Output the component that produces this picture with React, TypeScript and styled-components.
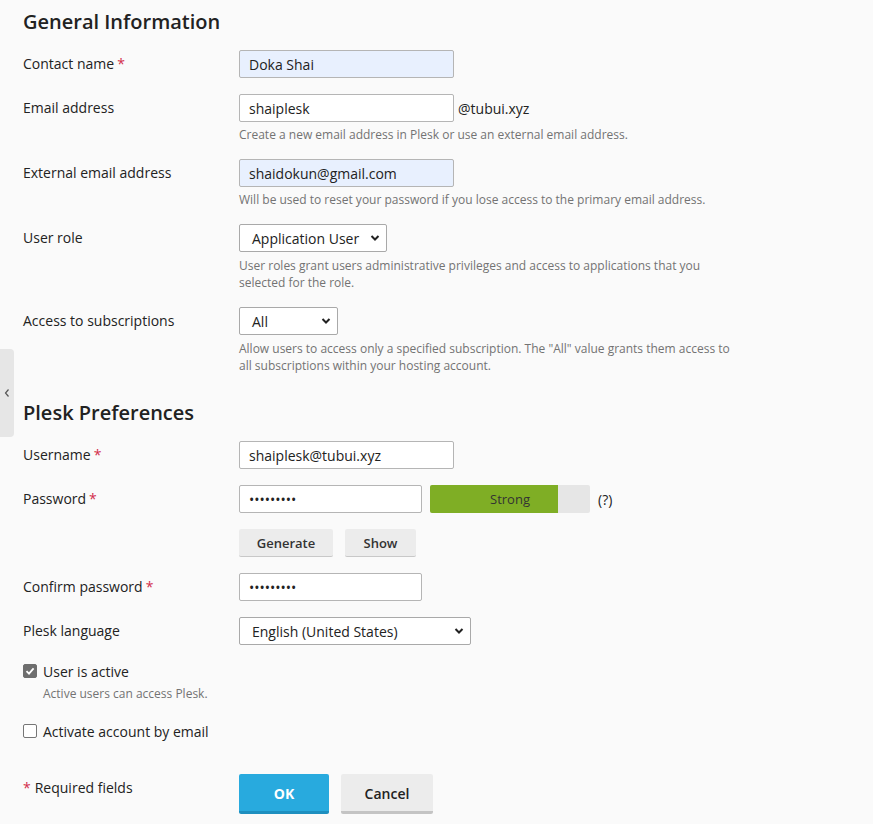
import React from 'react'
import styled, { createGlobalStyle } from 'styled-components'

const GlobalStyle = createGlobalStyle`
  html, body {
    margin: 0;
    padding: 0;
    background: #fafafa;
  }
  body {
    font-family: "Open Sans", "Noto Sans", sans-serif;
    color: #222;
    font-size: 14px;
  }
`

const Page = styled.div`
  position: relative;
  min-height: 824px;
  padding: 8px 0 0 23px;
  box-sizing: border-box;
`

const SideToggle = styled.div`
  position: absolute;
  left: 0;
  top: 349px;
  width: 14px;
  height: 88px;
  background: #e6e6e6;
  border-radius: 0 4px 4px 0;
  display: flex;
  align-items: center;
  justify-content: center;
`

const Heading = styled.h2<{ $top?: number }>`
  margin: ${(p) => p.$top ?? 0}px 0 14px;
  font-size: 20px;
  line-height: 28px;
  font-weight: 600;
  color: #222;
`

const Row = styled.div<{ $gap?: number }>`
  display: flex;
  align-items: flex-start;
  margin-bottom: ${(p) => p.$gap ?? 16}px;
`

const Label = styled.div`
  width: 216px;
  flex: none;
  line-height: 28px;
  font-size: 14px;
  color: #222;
`

const Star = styled.span`
  color: #d22d4b;
  margin-left: 3px;
`

const Field = styled.div`
  display: flex;
  flex-direction: column;
`

const Inline = styled.div<{ $gap?: number }>`
  display: flex;
  align-items: center;
  gap: ${(p) => p.$gap ?? 8}px;
`

const Input = styled.input<{ $width: number; $filled?: boolean }>`
  box-sizing: border-box;
  width: ${(p) => p.$width}px;
  height: 28px;
  padding: 0 9px;
  border: 1px solid #b5b5b5;
  border-radius: 2px;
  background: ${(p) => (p.$filled ? '#e8f0fe' : '#fff')};
  font-family: inherit;
  font-size: 14px;
  color: #222;
  outline: none;
`

const SelectBox = styled.div<{ $width: number }>`
  position: relative;
  box-sizing: border-box;
  width: ${(p) => p.$width}px;
  height: 28px;
  border: 1px solid #a9a9a9;
  border-radius: 2px;
  background: #fff;
  display: flex;
  align-items: center;
  padding: 0 12px;
  font-size: 14px;
  color: #222;

  svg {
    position: absolute;
    right: 6px;
    top: 9px;
  }
`

const Suffix = styled.span`
  font-size: 14px;
  color: #222;
`

const Hint = styled.div<{ $multi?: boolean }>`
  margin-top: ${(p) => (p.$multi ? 5 : 4)}px;
  width: 500px;
  font-size: 12px;
  line-height: 17px;
  color: #737373;
`

const Strength = styled.div`
  position: relative;
  width: 160px;
  height: 28px;
  background: #e6e6e6;
  border-radius: 2px;
  overflow: hidden;
  display: flex;
  align-items: center;
  justify-content: center;
  font-size: 13px;
  color: #333;
`

const StrengthFill = styled.div`
  position: absolute;
  left: 0;
  top: 0;
  bottom: 0;
  background: #7fae25;
`

const StrengthText = styled.span`
  position: relative;
`

const Help = styled.span`
  font-size: 14px;
  color: #222;
`

const SmallButton = styled.button<{ $width: number }>`
  box-sizing: border-box;
  width: ${(p) => p.$width}px;
  height: 28px;
  border: none;
  border-bottom: 1px solid #c8c8c8;
  border-radius: 2px;
  background: #ececec;
  font-family: inherit;
  font-size: 13px;
  font-weight: 600;
  color: #333;
  padding: 0;
`

const Buttons = styled.div`
  display: flex;
  gap: 12px;
`

const CheckRow = styled.label`
  display: flex;
  align-items: center;
  gap: 6px;
  height: 20px;
  font-size: 14px;
  color: #222;
`

const Box = styled.span<{ $checked?: boolean }>`
  box-sizing: border-box;
  width: 14px;
  height: 14px;
  border-radius: 2px;
  border: 1px solid ${(p) => (p.$checked ? '#6e6e6e' : '#767676')};
  background: ${(p) => (p.$checked ? '#6e6e6e' : '#fff')};
  display: flex;
  align-items: center;
  justify-content: center;
`

const CheckHint = styled.div`
  margin: 4px 0 19px 20px;
  font-size: 12px;
  line-height: 17px;
  color: #737373;
`

const Footer = styled.div`
  display: flex;
  align-items: flex-start;
  margin-top: 33px;
`

const FooterLabel = styled.div`
  width: 216px;
  line-height: 28px;
  font-size: 14px;
  color: #222;
`

const FooterStar = styled(Star)`
  margin: 0 4px 0 0;
`

const MainButton = styled.button<{ $primary?: boolean; $width: number }>`
  box-sizing: border-box;
  width: ${(p) => p.$width}px;
  height: 40px;
  border: none;
  border-bottom: 3px solid ${(p) => (p.$primary ? '#1e8fbf' : '#c4c4c4')};
  border-radius: 2px;
  background: ${(p) => (p.$primary ? '#28aade' : '#ececec')};
  color: ${(p) => (p.$primary ? '#fff' : '#222')};
  font-family: inherit;
  font-size: 14px;
  font-weight: ${(p) => (p.$primary ? 700 : 600)};
  padding: 2px 0 0;
`

const Chevron = () => (
  <svg width="10" height="8" viewBox="0 0 10 8">
    <path d="M1.5 2 L5 5.5 L8.5 2" fill="none" stroke="#222" strokeWidth="2" />
  </svg>
)

const Check = () => (
  <svg width="10" height="10" viewBox="0 0 10 10">
    <path d="M1.5 5.2 L4 7.6 L8.6 2.4" fill="none" stroke="#fff" strokeWidth="1.8" />
  </svg>
)

const Select = ({ width, value }: { width: number; value: string }) => (
  <SelectBox $width={width}>
    {value}
    <Chevron />
  </SelectBox>
)

export default function App() {
  return (
    <Page>
      <GlobalStyle />
      <SideToggle>
        <svg width="6" height="10" viewBox="0 0 6 10">
          <path d="M4.5 1.5 L1.5 5 L4.5 8.5" fill="none" stroke="#555" strokeWidth="1.2" />
        </svg>
      </SideToggle>

      <Heading>General Information</Heading>

      <Row>
        <Label>
          Contact name<Star>*</Star>
        </Label>
        <Input $width={215} $filled defaultValue="Doka Shai" />
      </Row>

      <Row>
        <Label>Email address</Label>
        <Field>
          <Inline $gap={4}>
            <Input $width={215} defaultValue="shaiplesk" />
            <Suffix>@tubui.xyz</Suffix>
          </Inline>
          <Hint>Create a new email address in Plesk or use an external email address.</Hint>
        </Field>
      </Row>

      <Row>
        <Label>External email address</Label>
        <Field>
          <Input $width={215} $filled defaultValue="shaidokun@gmail.com" />
          <Hint>Will be used to reset your password if you lose access to the primary email address.</Hint>
        </Field>
      </Row>

      <Row>
        <Label>User role</Label>
        <Field>
          <Select width={148} value="Application User" />
          <Hint $multi>
            User roles grant users administrative privileges and access to applications that you
            selected for the role.
          </Hint>
        </Field>
      </Row>

      <Row>
        <Label>Access to subscriptions</Label>
        <Field>
          <Select width={99} value="All" />
          <Hint $multi>
            Allow users to access only a specified subscription. The "All" value grants them access to
            all subscriptions within your hosting account.
          </Hint>
        </Field>
      </Row>

      <Heading $top={25}>Plesk Preferences</Heading>

      <Row>
        <Label>
          Username<Star>*</Star>
        </Label>
        <Input $width={215} defaultValue="shaiplesk@tubui.xyz" />
      </Row>

      <Row>
        <Label>
          Password<Star>*</Star>
        </Label>
        <Inline>
          <Input $width={183} type="password" defaultValue="123456789" />
          <Strength>
            <StrengthFill style={{ width: '80%' }} />
            <StrengthText>Strong</StrengthText>
          </Strength>
          <Help>(?)</Help>
        </Inline>
      </Row>

      <Row>
        <Label />
        <Buttons>
          <SmallButton $width={94}>Generate</SmallButton>
          <SmallButton $width={71}>Show</SmallButton>
        </Buttons>
      </Row>

      <Row>
        <Label>
          Confirm password<Star>*</Star>
        </Label>
        <Input $width={183} type="password" defaultValue="123456789" />
      </Row>

      <Row>
        <Label>Plesk language</Label>
        <Select width={232} value="English (United States)" />
      </Row>

      <CheckRow>
        <Box $checked>
          <Check />
        </Box>
        User is active
      </CheckRow>
      <CheckHint>Active users can access Plesk.</CheckHint>

      <CheckRow>
        <Box />
        Activate account by email
      </CheckRow>

      <Footer>
        <FooterLabel>
          <FooterStar>*</FooterStar>Required fields
        </FooterLabel>
        <Buttons>
          <MainButton $primary $width={90}>
            OK
          </MainButton>
          <MainButton $width={92}>Cancel</MainButton>
        </Buttons>
      </Footer>
    </Page>
  )
}
